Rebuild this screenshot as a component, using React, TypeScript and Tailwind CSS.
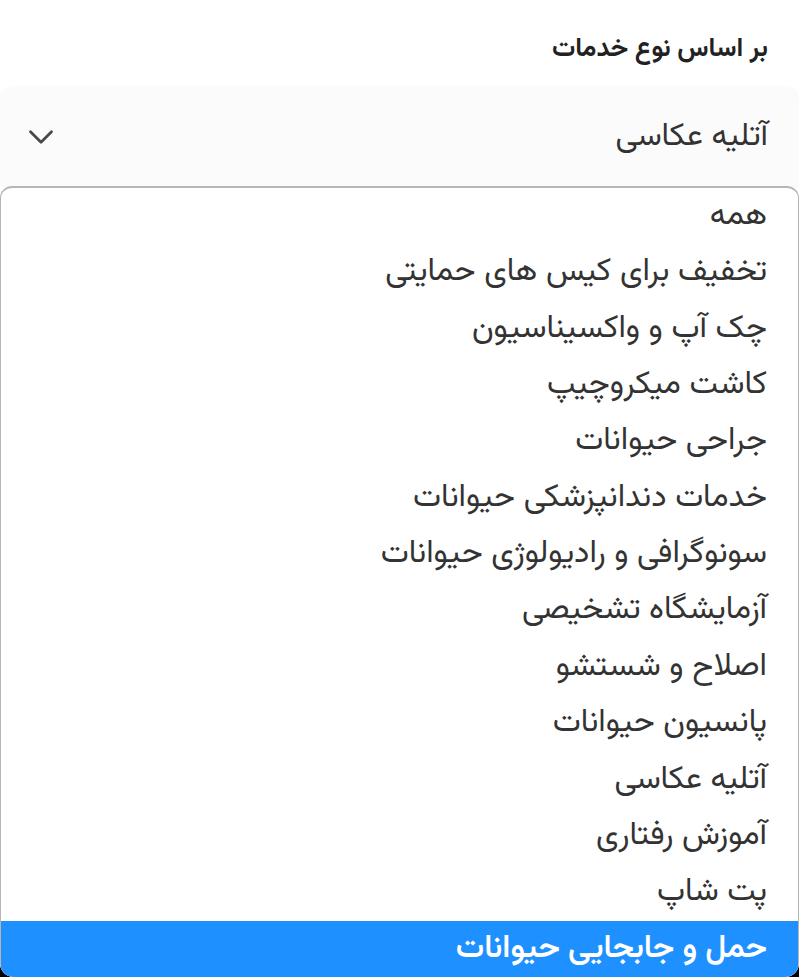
import { ChevronDown } from 'lucide-react';

const options = [
  'همه',
  'تخفیف برای کیس های حمایتی',
  'چک آپ و واکسیناسیون',
  'کاشت میکروچیپ',
  'جراحی حیوانات',
  'خدمات دندانپزشکی حیوانات',
  'سونوگرافی و رادیولوژی حیوانات',
  'آزمایشگاه تشخیصی',
  'اصلاح و شستشو',
  'پانسیون حیوانات',
  'آتلیه عکاسی',
  'آموزش رفتاری',
  'پت شاپ',
  'حمل و جابجایی حیوانات',
];

export default function App() {
  return (
    <div
      dir="rtl"
      className="w-[799px] h-[977px] overflow-hidden bg-black"
      style={{ fontFamily: '"Vazirmatn", "Noto Sans Arabic", "DejaVu Sans", sans-serif' }}
    >
      <div className="h-full bg-white rounded-b-[14px] overflow-hidden flex flex-col">
        {/* Label */}
        <div className="h-[90px] flex items-center pr-[31px] pt-[10px] text-[26px] font-bold text-[#222]">
          بر اساس نوع خدمات
        </div>

        {/* Select box */}
        <div className="h-[98px] flex items-center justify-between pr-[31px] pl-[20px] bg-[#fbfbfb] rounded-t-[14px] shadow-[0_0_6px_rgba(0,0,0,0.06)]">
          <span className="text-[32px] text-[#333]">آتلیه عکاسی</span>
          <ChevronDown className="w-[42px] h-[42px] text-[#4a4a4a]" strokeWidth={1.6} />
        </div>

        {/* Options */}
        <div className="flex-1 flex flex-col border-t-2 border-x border-[#b5b5b5] rounded-t-[12px] bg-white">
          {options.map((o, i) => {
            const active = i === options.length - 1;
            return (
              <div
                key={o}
                className={`h-[56.4px] flex items-center pr-[31px] text-[32px] ${
                  active ? 'bg-[#1e90ff] text-white font-semibold' : 'text-[#333]'
                }`}
              >
                {o}
              </div>
            );
          })}
        </div>
      </div>
    </div>
  );
}
